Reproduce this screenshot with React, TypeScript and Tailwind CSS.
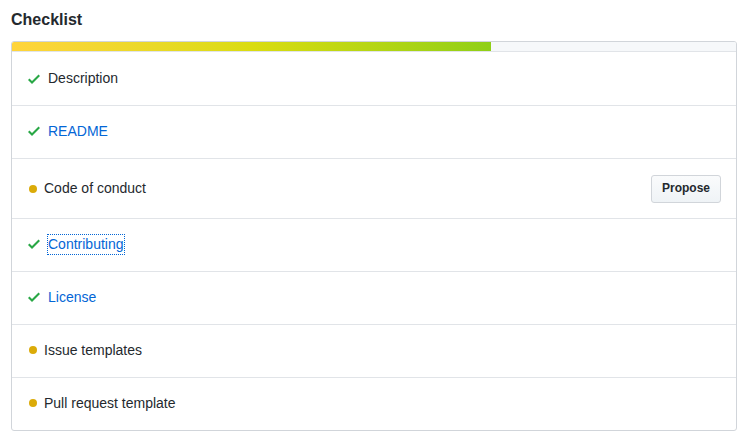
import React from "react";

type Item = { label: string; done: boolean; link?: boolean; focus?: boolean; propose?: boolean };

const items: Item[] = [
  { label: "Description", done: true },
  { label: "README", done: true, link: true },
  { label: "Code of conduct", done: false, propose: true },
  { label: "Contributing", done: true, link: true, focus: true },
  { label: "License", done: true, link: true },
  { label: "Issue templates", done: false },
  { label: "Pull request template", done: false },
];

function Check() {
  return (
    <svg width="12" height="16" viewBox="0 0 12 16" className="shrink-0">
      <path fillRule="evenodd" fill="#28a745" d="M12 5l-8 8-4-4 1.5-1.5L4 10l6.5-6.5L12 5z" />
    </svg>
  );
}

export default function App() {
  return (
    <div className="bg-white w-[747px] h-[442px] px-[11px] pt-[9px] text-[#24292e]" style={{ fontFamily: '"Liberation Sans", Arial, sans-serif' }}>
      <h2 className="text-[16px] font-bold leading-[22px] mb-[10px]">Checklist</h2>
      <div className="border border-[#d1d5da] rounded-[3px] w-[726px] overflow-hidden">
        <div className="h-[10px] bg-[#f6f8fa] border-b border-[#e1e4e8]">
          <div className="h-full w-[479px] bg-gradient-to-r from-[#ffd43b] via-[#dadc10] to-[#8fcf17]" />
        </div>
        {items.map((it, i) => (
          <div
            key={i}
            className={`flex items-center pl-[16px] pr-[15px] text-[14px] leading-[19px] ${i > 0 ? "border-t border-[#e1e4e8]" : ""} ${it.propose ? "h-[60px]" : i > 0 ? "h-[53px] pb-[2px]" : "h-[53px]"}`}
          >
            {it.done ? (
              <span className="w-[20px] flex"><Check /></span>
            ) : (
              <span className="w-[16px] flex"><span className="w-[8px] h-[8px] rounded-full bg-[#dbab09] ml-[1px]" /></span>
            )}
            <span
              className={`${it.link ? "text-[#0366d6]" : ""} ${it.focus ? "outline outline-1 outline-dotted outline-[#0366d6]" : ""}`}
            >
              {it.label}
            </span>
            {it.propose && (
              <button className="ml-auto h-[28px] px-[10px] text-[12px] font-bold border border-[#d1d5da] rounded-[3px] bg-gradient-to-b from-[#fafbfc] to-[#eff3f6] text-[#24292e]">
                Propose
              </button>
            )}
          </div>
        ))}
      </div>
    </div>
  );
}
